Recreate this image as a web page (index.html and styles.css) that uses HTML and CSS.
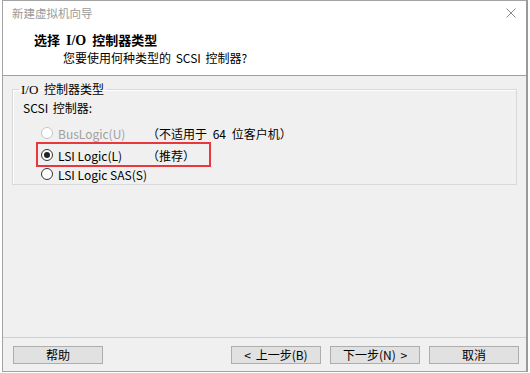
FILE: index.html
```html
<!DOCTYPE html>
<html lang="zh-CN">
<head>
<meta charset="utf-8">
<title>新建虚拟机向导</title>
<link rel="stylesheet" href="styles.css">
</head>
<body>
<div class="window">
  <div class="head">
    <div class="titlebar">
      <span class="title">新建虚拟机向导</span>
      <svg class="close" width="12" height="10" viewBox="0 0 12 10"><path d="M1.5 0.5 L10.5 9.5 M10.5 0.5 L1.5 9.5" stroke="#8a8a8a" stroke-width="1" fill="none"/></svg>
    </div>
    <div class="heading">选择 <span class="serif">I/O</span> 控制器类型</div>
    <div class="sub">您要使用何种类型的 SCSI 控制器?</div>
  </div>
  <div class="main">
    <fieldset class="group">
      <legend><span class="serif">I/O</span> 控制器类型</legend>
      <div class="label">SCSI 控制器:</div>
      <div class="opt opt-first disabled">
        <span class="radio"></span><span class="name">BusLogic(U)</span><span class="note">（不适用于 64 位客户机）</span>
      </div>
      <div class="opt opt-second">
        <span class="radio checked"></span><span class="name">LSI Logic(L)</span><span class="note">（推荐）</span>
        <span class="mark"></span>
      </div>
      <div class="opt opt-third">
        <span class="radio"></span><span class="name">LSI Logic SAS(S)</span>
      </div>
    </fieldset>
  </div>
  <div class="foot">
    <button class="btn">帮助</button>
    <span class="spacer"></span>
    <button class="btn">&lt; 上一步(B)</button>
    <button class="btn">下一步(N) &gt;</button>
    <button class="btn">取消</button>
  </div>
</div>
</body>
</html>
```
FILE: styles.css
```css
* { box-sizing: border-box; }
html, body { margin: 0; padding: 0; background: #ffffff; }
body {
  font-family: "Noto Sans CJK SC", "Noto Sans", sans-serif;
  font-size: 12px;
  color: #000;
}
.serif { font-family: "Liberation Serif", "Noto Sans CJK SC", serif; }
.window {
  margin-left: 2px;
  width: 526px;
  height: 372px;
  border: 1px solid #a3a3a3;
  border-right: 2px solid #9a9a9a;
  background: #f0f0f0;
  display: flex;
  flex-direction: column;
}
.head {
  height: 75px;
  background: #fff;
  border-bottom: 1px solid #a0a0a0;
}
.titlebar {
  height: 24px;
  display: flex;
  align-items: center;
  justify-content: space-between;
  padding: 0 9px 0 9px;
}
.title { color: #9a9a9a; font-size: 11.5px; line-height: 24px; }
.close { display: block; margin-top: -1px; }
.heading {
  margin-top: 7px;
  padding-left: 31px;
  font-weight: bold;
  font-size: 13px;
  line-height: 16px;
  word-spacing: 3px;
}
.heading .serif { font-size: 14px; }
.sub {
  margin-top: 1px;
  padding-left: 60px;
  line-height: 16px;
  font-size: 12px;
  word-spacing: 2px;
}
.main {
  height: 261px;
  padding: 5px 9px 0 9px;
}
.group {
  margin: 0;
  padding: 2px 0 2px 0;
  border: 1px solid #d9d9d9;
  box-shadow: inset 1px 1px 0 #fff;
}
.group legend {
  margin-left: 6px;
  padding: 0 2px;
  line-height: 16px;
  word-spacing: 3px;
}
.group legend .serif { font-size: 13px; }
.label {
  padding-left: 10px;
  line-height: 16px;
  word-spacing: 2px;
}
.opt {
  position: relative;
  display: flex;
  align-items: center;
  height: 16px;
  padding-left: 28px;
}
.opt-first { margin-top: 9px; }
.opt-second { margin-top: 6px; }
.opt-third { margin-top: 3px; }
.radio {
  width: 12px;
  height: 12px;
  border: 1px solid #333;
  border-radius: 50%;
  background: #fff;
  display: flex;
  align-items: center;
  justify-content: center;
  margin-right: 5px;
}
.radio.checked::after {
  content: "";
  width: 6px;
  height: 6px;
  border-radius: 50%;
  background: #222;
}
.disabled .radio { border-color: #c4c4c4; }
.disabled .name { color: #a0a0a0; }
.name { width: 89px; white-space: nowrap; }
.note { white-space: nowrap; word-spacing: 3px; }
.mark {
  position: absolute;
  left: 23px;
  top: -5px;
  width: 175px;
  height: 25px;
  border: 2px solid #e8383d;
}
.foot {
  height: 34px;
  border-top: 1px solid #d0d0d0;
  display: flex;
  align-items: flex-start;
  gap: 9px;
  padding: 8px 7px 0 10px;
}
.spacer { flex: 1; }
.btn {
  width: 90px;
  height: 18px;
  padding: 0;
  background: #e1e1e1;
  border: 1px solid #adadad;
  font-family: inherit;
  font-size: 12px;
  color: #000;
  line-height: 16px;
  word-spacing: 2px;
}
```
